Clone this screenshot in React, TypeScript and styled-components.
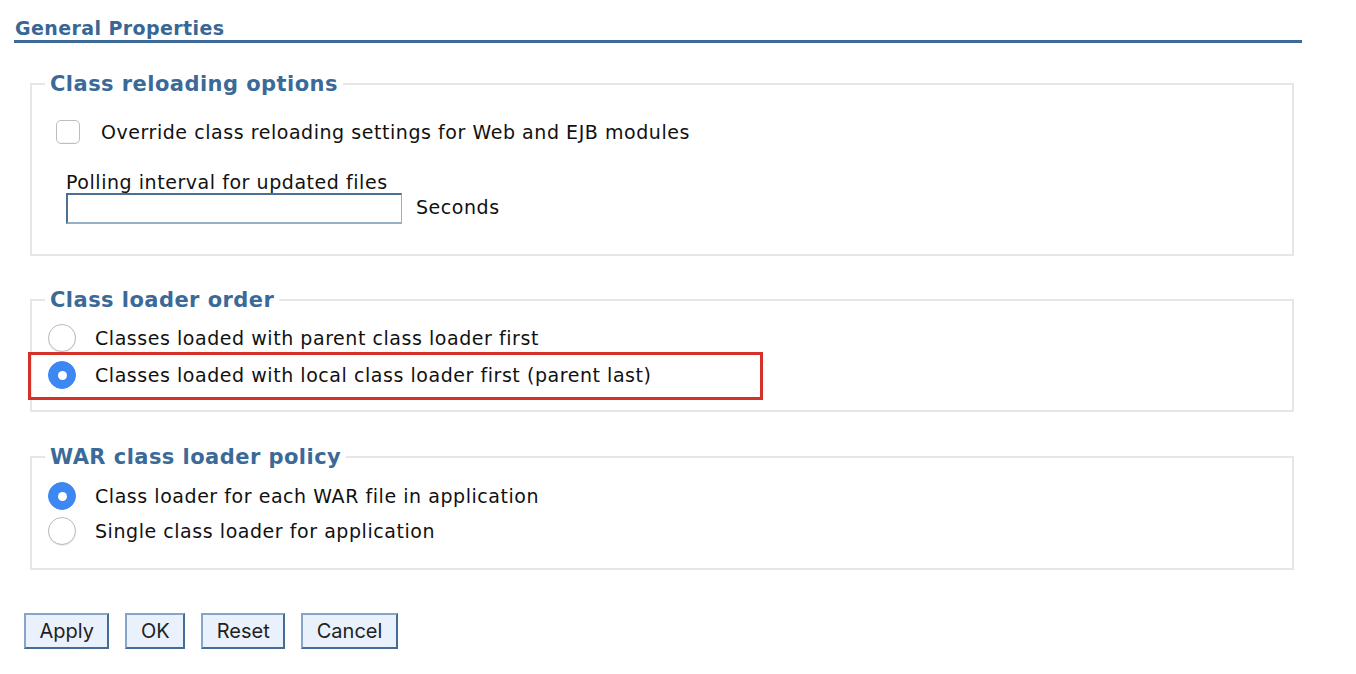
import React from "react";
import styled, { createGlobalStyle } from "styled-components";

const Global = createGlobalStyle`
  html, body { margin: 0; padding: 0; background: #ffffff; }
  body { font-family: "DejaVu Sans", Verdana, sans-serif; color: #111; }
`;

const Page = styled.div`
  padding: 17px 54px 20px 14px;
  width: 1288px;
`;

const Header = styled.h2`
  margin: 0;
  padding: 0 0 1px 1px;
  font-size: 19px;
  line-height: 22px;
  letter-spacing: 0.4px;
  font-weight: bold;
  color: #386794;
  border-bottom: 3px solid #3d6a98;
`;

const Group = styled.fieldset<{ $top: number; $pt: number; $pb: number }>`
  margin: ${(p) => p.$top}px 8px 0 16px;
  padding: ${(p) => p.$pt}px 0 ${(p) => p.$pb}px 0;
  border: 2px solid #e6e6e6;
  min-width: 0;
`;

const Legend = styled.legend`
  margin-left: 13px;
  padding: 0 5px;
  font-size: 21px;
  line-height: 22px;
  letter-spacing: 0.45px;
  font-weight: bold;
  color: #3b6a99;
`;

const Rows = styled.div<{ $gap: number }>`
  display: flex;
  flex-direction: column;
  gap: ${(p) => p.$gap}px;
  padding-left: 16px;
`;

const Text = styled.span`
  font-size: 19px;
  letter-spacing: 0.55px;
  white-space: nowrap;
`;

const CheckRow = styled.label`
  display: flex;
  align-items: center;
  gap: 21px;
  height: 28px;
  padding-left: 24px;
`;

const Box = styled.span`
  width: 22px;
  height: 22px;
  border: 1px solid #bdbdbd;
  border-radius: 5px;
  background: #fff;
  box-shadow: inset 0 -1px 1px rgba(0, 0, 0, 0.04);
`;

const Field = styled.div`
  margin-top: 25px;
  padding-left: 34px;
`;

const FieldLabel = styled(Text)`
  display: block;
  line-height: 22px;
`;

const FieldLine = styled.div`
  display: flex;
  align-items: center;
  gap: 14px;
  margin-top: 0;
`;

const TextBox = styled.input`
  box-sizing: border-box;
  width: 336px;
  height: 31px;
  margin: 0;
  border-style: solid;
  border-width: 2px 1px 2px 2px;
  border-color: #4d7092 #97afc4 #97afc4 #4d7092;
  background: #fff;
  outline: none;
`;

const Seconds = styled(Text)`
  margin-top: -4px;
`;

const RadioRow = styled.label`
  position: relative;
  display: flex;
  align-items: center;
  gap: 19px;
  height: 30px;
`;

const Radio = styled.span<{ $on?: boolean }>`
  box-sizing: border-box;
  width: 28px;
  height: 28px;
  border-radius: 50%;
  display: flex;
  align-items: center;
  justify-content: center;
  background: ${(p) => (p.$on ? "#3d87f2" : "#fff")};
  border: 1px solid ${(p) => (p.$on ? "#3d87f2" : "#b9b9b9")};
  box-shadow: ${(p) => (p.$on ? "none" : "0 1px 1px rgba(0,0,0,0.08)")};
  &::after {
    content: "";
    display: ${(p) => (p.$on ? "block" : "none")};
    width: 9px;
    height: 9px;
    border-radius: 50%;
    background: #fff;
  }
`;

const Highlight = styled.span`
  position: absolute;
  left: -20px;
  top: -8px;
  width: 735px;
  height: 48px;
  box-sizing: border-box;
  border: 3px solid #d3312a;
  pointer-events: none;
`;

const Buttons = styled.div`
  display: flex;
  gap: 16px;
  margin: 43px 0 0 10px;
`;

const Button = styled.button`
  box-sizing: border-box;
  height: 36px;
  padding: 0 13.5px;
  font-family: Inter, "Liberation Sans", sans-serif;
  font-size: 20px;
  color: #222;
  background: #e9f1fd;
  border-style: solid;
  border-width: 2px;
  border-color: #86a5c8 #456c94 #456c94 #86a5c8;
  border-radius: 0;
`;

export default function App() {
  return (
    <>
      <Global />
      <Page>
        <Header>General Properties</Header>

        <Group $top={30} $pt={23} $pb={30}>
          <Legend>Class reloading options</Legend>
          <CheckRow>
            <Box />
            <Text>Override class reloading settings for Web and EJB modules</Text>
          </CheckRow>
          <Field>
            <FieldLabel>Polling interval for updated files</FieldLabel>
            <FieldLine>
              <TextBox type="text" />
              <Seconds>Seconds</Seconds>
            </FieldLine>
          </Field>
        </Group>

        <Group $top={33} $pt={12} $pb={20}>
          <Legend>Class loader order</Legend>
          <Rows $gap={7}>
            <RadioRow>
              <Radio />
              <Text>Classes loaded with parent class loader first</Text>
            </RadioRow>
            <RadioRow>
              <Radio $on />
              <Text>Classes loaded with local class loader first (parent last)</Text>
              <Highlight />
            </RadioRow>
          </Rows>
        </Group>

        <Group $top={34} $pt={13} $pb={22}>
          <Legend>WAR class loader policy</Legend>
          <Rows $gap={5}>
            <RadioRow>
              <Radio $on />
              <Text>Class loader for each WAR file in application</Text>
            </RadioRow>
            <RadioRow>
              <Radio />
              <Text>Single class loader for application</Text>
            </RadioRow>
          </Rows>
        </Group>

        <Buttons>
          <Button>Apply</Button>
          <Button>OK</Button>
          <Button>Reset</Button>
          <Button>Cancel</Button>
        </Buttons>
      </Page>
    </>
  );
}
